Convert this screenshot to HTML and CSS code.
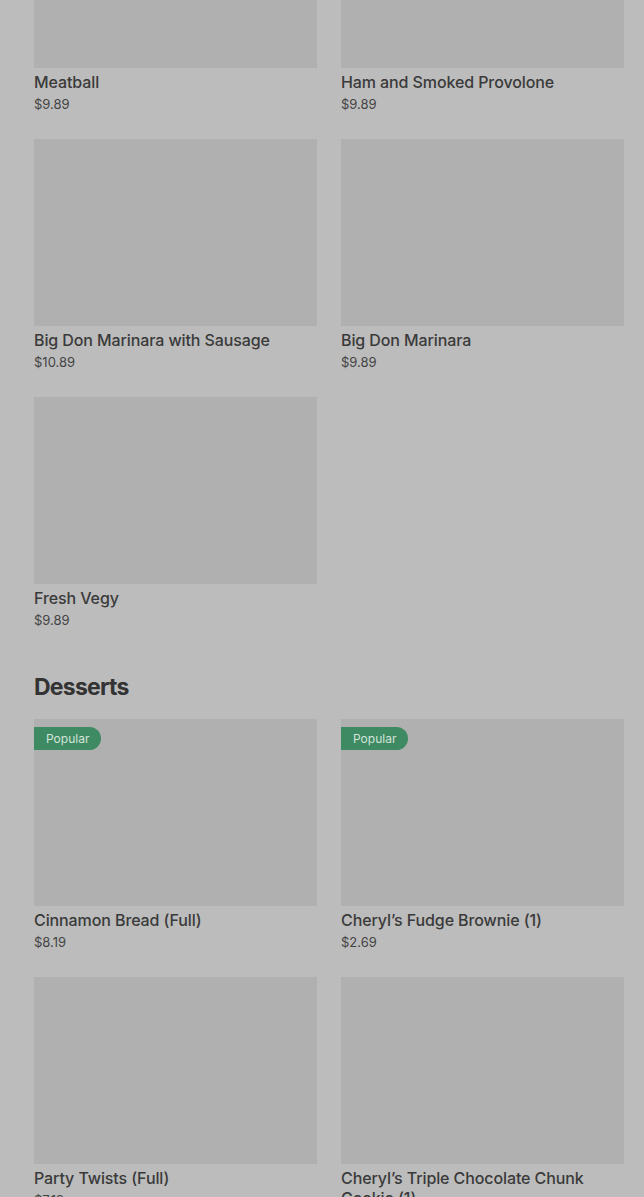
FILE: index.html
```html
<!DOCTYPE html>
<html>
<head>
<meta charset="utf-8">
<link rel="stylesheet" href="styles.css">
</head>
<body>
<main class="page">
  <section class="section first">
    <div class="grid">
      <div class="card"><div class="thumb"></div><div class="name">Meatball</div><div class="price">$9.89</div></div>
      <div class="card"><div class="thumb"></div><div class="name">Ham and Smoked Provolone</div><div class="price">$9.89</div></div>
      <div class="card"><div class="thumb"></div><div class="name">Big Don Marinara with Sausage</div><div class="price">$10.89</div></div>
      <div class="card"><div class="thumb"></div><div class="name">Big Don Marinara</div><div class="price">$9.89</div></div>
      <div class="card"><div class="thumb"></div><div class="name">Fresh Vegy</div><div class="price">$9.89</div></div>
    </div>
  </section>
  <section class="section">
    <h2 class="heading">Desserts</h2>
    <div class="grid">
      <div class="card"><div class="thumb"><span class="badge">Popular</span></div><div class="name">Cinnamon Bread (Full)</div><div class="price">$8.19</div></div>
      <div class="card"><div class="thumb"><span class="badge">Popular</span></div><div class="name">Cheryl’s Fudge Brownie (1)</div><div class="price">$2.69</div></div>
      <div class="card"><div class="thumb"></div><div class="name">Party Twists (Full)</div><div class="price">$7.19</div></div>
      <div class="card"><div class="thumb"></div><div class="name">Cheryl’s Triple Chocolate Chunk Cookie (1)</div><div class="price">$2.19</div></div>
    </div>
  </section>
</main>
</body>
</html>
```
FILE: styles.css
```css
html, body {
  margin: 0;
  padding: 0;
  background: #bcbcbc;
  overflow: hidden;
}
body {
  font-family: Inter, "Noto Sans", Roboto, sans-serif;
  color: #383838;
}
.page {
  padding: 0 20px 0 34px;
  margin-top: -119px;
}
.section.first {
  padding-bottom: 41px;
}
.grid {
  display: grid;
  grid-template-columns: 283px 283px;
  column-gap: 24px;
  row-gap: 25px;
}
.card {
  display: flex;
  flex-direction: column;
}
.thumb {
  position: relative;
  height: 187px;
  background: #b0b0b0;
}
.name {
  margin-top: 4px;
  font-size: 16px;
  line-height: 20px;
  font-weight: 500;
  color: #3a3a3a;
  letter-spacing: -0.1px;
}
.price {
  margin-top: 2px;
  font-size: 13px;
  line-height: 20px;
  color: #444;
}
.heading {
  margin: 0 0 16px;
  font-size: 23px;
  line-height: 32px;
  font-weight: 700;
  color: #333;
  letter-spacing: -0.75px;
}
.badge {
  position: absolute;
  left: 0;
  top: 8px;
  height: 23px;
  padding: 0 12px;
  display: flex;
  align-items: center;
  background: #3e8a63;
  color: #d4e4da;
  font-size: 12px;
  border-radius: 0 12px 12px 0;
}
```
